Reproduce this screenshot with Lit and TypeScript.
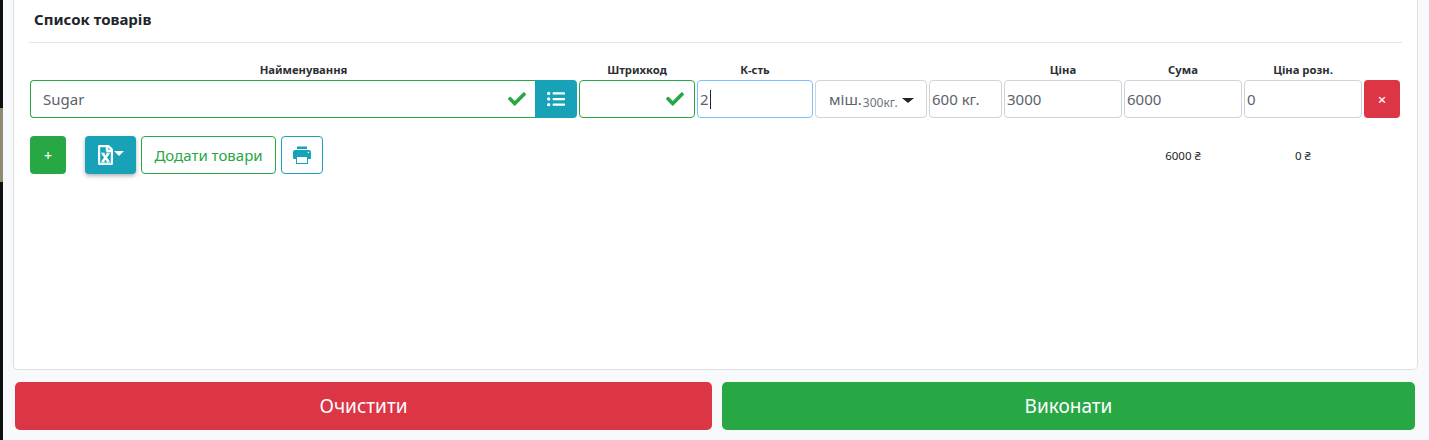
import { LitElement, html, css, svg } from "lit";
import { customElement } from "lit/decorators.js";

const CHECK = svg`<path d="M173.898 439.404l-166.4-166.4c-9.997-9.997-9.997-26.206 0-36.204l36.203-36.204c9.997-9.998 26.207-9.998 36.204 0L192 312.69 432.095 72.596c9.997-9.997 26.207-9.997 36.204 0l36.203 36.204c9.997 9.997 9.997 26.206 0 36.204l-294.4 294.401c-9.998 9.997-26.207 9.997-36.204-.001z"/>`;
const LIST = svg`<path d="M48 48a48 48 0 1 0 48 48 48 48 0 0 0-48-48zm0 160a48 48 0 1 0 48 48 48 48 0 0 0-48-48zm0 160a48 48 0 1 0 48 48 48 48 0 0 0-48-48zm448 16H176a16 16 0 0 0-16 16v32a16 16 0 0 0 16 16h320a16 16 0 0 0 16-16v-32a16 16 0 0 0-16-16zm0-320H176a16 16 0 0 0-16 16v32a16 16 0 0 0 16 16h320a16 16 0 0 0 16-16V80a16 16 0 0 0-16-16zm0 160H176a16 16 0 0 0-16 16v32a16 16 0 0 0 16 16h320a16 16 0 0 0 16-16v-32a16 16 0 0 0-16-16z"/>`;
const PRINT = svg`<path d="M4 0.5h10v2.5H4zM2 4h14a2 2 0 0 1 2 2v6a1 1 0 0 1-1 1h-2v-3H3v3H1a1 1 0 0 1-1-1V6a2 2 0 0 1 2-2zM3 10h12v8H3v-1h11v-6H4v6H3z"/><circle cx="15.5" cy="6.5" r="0.8" fill="#fff"/>`;
const EXCEL = svg`<path stroke="#fff" stroke-width="14" d="M369.9 97.9L286 14C277 5 264.8-.1 252.1-.1H48C21.5 0 0 21.5 0 48v416c0 26.5 21.5 48 48 48h288c26.5 0 48-21.5 48-48V131.9c0-12.7-5.1-25-14.1-34zM332.1 128H256V51.9l76.1 76.1zM48 464V48h160v104c0 13.3 10.7 24 24 24h104v288H48z"/><path fill="none" stroke="#fff" stroke-width="64" d="M118 216L272 430M268 216L114 430"/><path fill="none" stroke="#fff" stroke-width="24" d="M80 210h96M210 210h96M80 436h96M210 436h96"/>`;

@customElement("app-root")
export class AppRoot extends LitElement {
  static styles = css`
    :host {
      display: flex;
      width: 1429px;
      height: 440px;
      overflow: hidden;
      background: #f8f9fa;
      font-family: "Noto Sans", "Open Sans", sans-serif;
      color: #212529;
    }
    * { box-sizing: border-box; }
    .strip { width: 3px; flex: none; display: flex; flex-direction: column; background: #0d0f10; }
    .strip-top { height: 108px; }
    .strip-tan { height: 74px; background: #8f8a70; }
    .main { flex: 1; padding: 0 11px 0 10px; display: flex; flex-direction: column; }
    .card {
      height: 370px;
      flex: none;
      width: 1405px;
      background: #fff;
      border: 1px solid #dfdfdf;
      border-top: 0;
      border-radius: 0 0 5px 5px;
      padding: 0 15px;
    }
    .title {
      height: 43px;
      padding: 9px 0 0 5px;
      font-size: 15px;
      line-height: 21px;
      font-weight: 700;
      border-bottom: 1px solid #e3e4e6;
    }
    .grid {
      display: grid;
      grid-template-columns: 547px 116px 116px 112px 73px 118px 118px 118px 36px;
      column-gap: 2px;
      margin: 0 0 0 1px;
    }
    .labels { padding-top: 18px; height: 37px; }
    .label { font-size: 11.25px; line-height: 17px; font-weight: 700; text-align: center; color: #2b2f33; }
    .row { height: 38px; }
    .field {
      height: 38px;
      border: 1px solid #ced4da;
      border-radius: 4px;
      background: #fff;
      padding: 0 2px;
      display: flex;
      align-items: center;
      font-size: 15px;
      color: #5b6269;
      white-space: nowrap;
      overflow: hidden;
    }
    .valid { border-color: #28a745; justify-content: space-between; }
    .focus { border-color: #80bdff; }
    .caret { width: 1px; height: 19px; background: #212529; margin-left: 1px; }
    .name { display: flex; }
    .name .field { flex: 1; border-radius: 4px 0 0 4px; border-right: 0; padding: 0 9px 0 12px; }
    .barcode { padding-right: 10px; }
    .check { width: 18px; height: 18px; fill: #28a745; }
    .list-btn {
      width: 42px;
      height: 38px;
      border-radius: 0 4px 4px 0;
      background: #17a2b8;
      display: flex;
      align-items: center;
      justify-content: center;
    }
    .list-btn svg { width: 18px; height: 18px; fill: #fff; }
    .unit { padding: 0 12px 0 13px; }
    .unit small { font-size: 12px; color: #6c757d; margin: 7px 0 0 1px; }
    .triangle {
      width: 0;
      height: 0;
      margin: 2px 0 0 4px;
      border: 6px solid transparent;
      border-top-color: #212529;
      border-bottom: 0;
      border-top-width: 5px;
    }
    .del {
      height: 38px;
      border-radius: 4px;
      background: #dc3545;
      color: #fff;
      font-size: 15px;
      font-weight: 500;
      display: flex;
      align-items: center;
      justify-content: center;
    }
    .actions { margin: 18px 0 0 1px; height: 38px; position: relative; display: flex; }
    .btn {
      height: 38px;
      border-radius: 4px;
      display: flex;
      align-items: center;
      justify-content: center;
      font-size: 14px;
      border: 1px solid transparent;
    }
    .add { width: 36px; background: #28a745; color: #fff; font-size: 14px; font-weight: 500; margin-right: 19px; }
    .excel {
      width: 51px;
      background: #17a2b8;
      margin-right: 5px;
      box-shadow: 0 2px 4px rgba(0, 0, 0, 0.3);
    }
    .excel svg { width: 15px; height: 20px; fill: #fff; }
    .excel .triangle { border-width: 5px; border-bottom: 0; border-top-color: #fff; margin: -3px 0 0 1px; }
    .goods { width: 135px; border-color: #28a745; color: #28a745; margin-right: 5px; font-size: 15px; }
    .print { width: 42px; border-color: #17a2b8; }
    .print svg { width: 18px; height: 18px; fill: #17a2b8; }
    .totals {
      flex: 1;
      display: grid;
      grid-template-columns: 118px 118px;
      column-gap: 2px;
      justify-content: end;
      padding-right: 40px;
      align-items: center;
      font-size: 11.5px;
      text-align: center;
      color: #212529;
    }
    .footer { display: flex; gap: 10px; margin: 12px 3px 0 2px; }
    .big {
      height: 48px;
      border-radius: 5px;
      color: #fff;
      font-size: 19px;
      display: flex;
      align-items: center;
      justify-content: center;
    }
    .clear { background: #dc3545; width: 697px; }
    .run { background: #28a745; width: 693px; }
  `;

  render() {
    return html`
      <div class="strip"><div class="strip-top"></div><div class="strip-tan"></div></div>
      <div class="main">
        <section class="card">
          <div class="title">Список товарів</div>
          <div class="grid labels">
            <div class="label">Найменування</div>
            <div class="label">Штрихкод</div>
            <div class="label">К-сть</div>
            <div></div>
            <div></div>
            <div class="label">Ціна</div>
            <div class="label">Сума</div>
            <div class="label">Ціна розн.</div>
            <div></div>
          </div>
          <div class="grid row">
            <div class="name">
              <div class="field valid">
                <span>Sugar</span>
                <svg class="check" viewBox="0 0 512 512">${CHECK}</svg>
              </div>
              <div class="list-btn"><svg viewBox="0 0 512 512">${LIST}</svg></div>
            </div>
            <div class="field valid barcode">
              <span></span>
              <svg class="check" viewBox="0 0 512 512">${CHECK}</svg>
            </div>
            <div class="field focus"><span>2</span><i class="caret"></i></div>
            <div class="field unit">
              <span>міш.</span><small>300кг.</small><i class="triangle"></i>
            </div>
            <div class="field">600 кг.</div>
            <div class="field">3000</div>
            <div class="field">6000</div>
            <div class="field">0</div>
            <div class="del">×</div>
          </div>
          <div class="actions">
            <div class="btn add">+</div>
            <div class="btn excel">
              <svg viewBox="0 0 384 512">${EXCEL}</svg><i class="triangle"></i>
            </div>
            <div class="btn goods">Додати товари</div>
            <div class="btn print"><svg viewBox="0 0 18 18">${PRINT}</svg></div>
            <div class="totals"><span>6000 ₴</span><span>0 ₴</span></div>
          </div>
        </section>
        <div class="footer">
          <div class="big clear">Очистити</div>
          <div class="big run">Виконати</div>
        </div>
      </div>
    `;
  }
}
